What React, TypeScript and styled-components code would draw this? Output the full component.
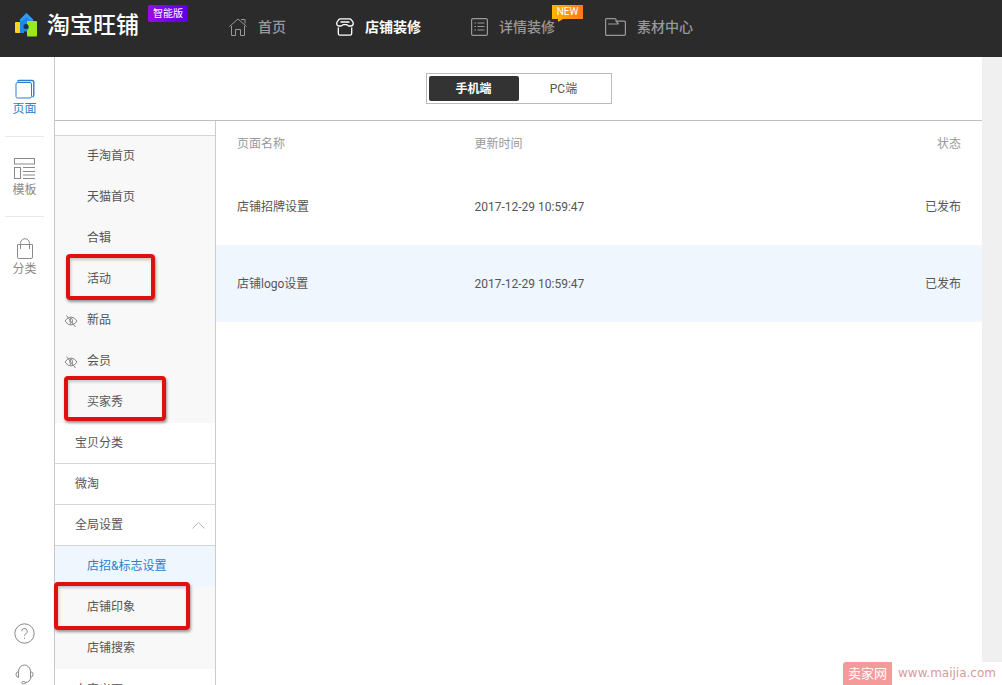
import React from "react";
import styled, { createGlobalStyle, css } from "styled-components";

const GlobalStyle = createGlobalStyle`
  * { box-sizing: border-box; }
  body {
    margin: 0;
    background: #f0f0f0;
    color: #555;
    font: 12px/20px Roboto, "Noto Sans CJK SC", sans-serif;
  }
  a { color: inherit; text-decoration: none; }
  button { font: inherit; color: inherit; border: 0; padding: 0; background: none; cursor: pointer; }
  svg { display: block; flex: none; }
`;

const Page = styled.div`
  display: flex;
  flex-direction: column;
  height: 100vh;
  overflow: hidden;
`;

const Header = styled.header`
  display: flex;
  flex: none;
  align-items: flex-start;
  height: 57px;
  padding-left: 14px;
  background: #2b2b2b;
`;

const Brand = styled.a`
  display: flex;
  gap: 9px;
  width: 215px;
  color: #fff;
`;

const BrandIcon = styled.svg`
  margin-top: 12px;
`;

const BrandName = styled.span`
  margin-top: 11px;
  font-size: 23px;
  font-weight: 500;
  line-height: 30px;
  white-space: nowrap;
`;

const Edition = styled.span`
  flex: none;
  height: 17px;
  margin-top: 5px;
  padding: 0 5px;
  border-radius: 2px;
  background: linear-gradient(90deg, #9a0ae6, #5a00e6);
  font-size: 10px;
  line-height: 17px;
`;

const TopNav = styled.nav`
  display: flex;
  gap: 50px;
`;

const TopLink = styled.a<{ $active?: boolean }>`
  position: relative;
  display: flex;
  align-items: center;
  gap: 11px;
  height: 54px;
  color: ${(p) => (p.$active ? "#fff" : "#999")};
  font-size: 14px;
  font-weight: ${(p) => (p.$active ? 700 : 500)};
  white-space: nowrap;
`;

const NewBadge = styled.span`
  position: absolute;
  top: 5px;
  right: -28px;
  width: 31px;
  height: 14px;
  background: linear-gradient(90deg, #ffb400, #ff7a1a);
  color: #fff;
  font-size: 10px;
  font-weight: 400;
  line-height: 14px;
  text-align: center;

  &::after {
    content: "";
    position: absolute;
    top: 14px;
    left: 6px;
    border-top: 3px solid #ffa808;
    border-right: 5px solid transparent;
  }
`;

const Body = styled.div`
  display: flex;
  flex: 1;
  min-height: 0;
  margin-right: 20px;
  background: #fff;
`;

const Rail = styled.nav`
  display: flex;
  flex: none;
  flex-direction: column;
  justify-content: space-between;
  width: 55px;
  padding: 0 10px 0 5px;
  border-right: 1px solid #c8c8c8;
`;

const RailLink = styled.a<{ $active?: boolean }>`
  display: flex;
  flex-direction: column;
  align-items: center;
  height: 79px;
  padding-top: 22px;
  color: ${(p) => (p.$active ? "#2a7fd0" : "#8a8a8a")};

  & + & {
    height: 80px;
    padding-top: 21px;
    border-top: 1px solid #e8e8e8;
  }
`;

const RailTools = styled.div`
  display: flex;
  flex-direction: column;
  align-items: center;
  gap: 20px;
  color: #888;
`;

const Main = styled.div`
  display: flex;
  flex: 1;
  flex-direction: column;
  min-width: 0;
`;

const DeviceBar = styled.div`
  display: flex;
  flex: none;
  align-items: center;
  justify-content: center;
  height: 64px;
  border-bottom: 1px solid #bfbfbf;
`;

const Segmented = styled.div`
  display: flex;
  height: 31px;
  padding: 2px;
  border: 1px solid #bbb;
`;

const Segment = styled.button<{ $active?: boolean }>`
  width: 90px;
  border-radius: 2px;
  ${(p) => p.$active && css`
    background: #333;
    color: #fff;
    font-weight: 700;
  `}
`;

const Workspace = styled.div`
  display: flex;
  flex: 1;
  min-height: 0;
`;

const SideNav = styled.nav`
  flex: none;
  width: 161px;
  padding-top: 14px;
  border-right: 1px solid #ccc;
`;

const SubList = styled.div`
  border-top: 1px solid #d4d4d4;
  background: #f8f8f8;
`;

const SideItem = styled.a<{ $level?: "top"; $active?: boolean; $ruled?: boolean }>`
  position: relative;
  display: flex;
  align-items: center;
  height: 41px;
  padding-left: ${(p) => (p.$level === "top" ? 20 : 32)}px;
  padding-bottom: ${(p) => (p.$level === "top" ? 0 : 2)}px;
  ${(p) => p.$ruled && css`border-bottom: 1px solid #d8d8d8;`}
  ${(p) => p.$active && css`
    background: #eff6fe;
    color: #2a7fd0;
  `}
`;

const SideToggle = styled(SideItem).attrs({ as: "button" })`
  justify-content: space-between;
  width: 100%;
  height: 40px;
  padding-right: 10px;
`;

const HiddenMark = styled.svg`
  position: absolute;
  top: 14px;
  left: 9px;
`;

const Highlight = styled.span<{ $top: number; $left: number; $width: number; $height: number }>`
  position: absolute;
  z-index: 1;
  top: ${(p) => p.$top}px;
  left: ${(p) => p.$left}px;
  width: ${(p) => p.$width}px;
  height: ${(p) => p.$height}px;
  border: 4px solid #de1010;
  border-radius: 4px;
  box-shadow: 1px 2px 3px rgba(0, 0, 0, 0.4), inset 1px 2px 3px rgba(0, 0, 0, 0.2);
`;

const Content = styled.main`
  flex: 1;
  min-width: 0;
`;

const Table = styled.table`
  width: 100%;
  border-collapse: collapse;
  table-layout: fixed;
`;

const Th = styled.th<{ $end?: boolean }>`
  width: ${(p) => (p.$end ? "auto" : "31%")};
  height: 47px;
  padding: 0 21px 2px;
  color: #999;
  font-weight: 400;
  text-align: ${(p) => (p.$end ? "right" : "left")};
`;

const Row = styled.tr<{ $tinted?: boolean }>`
  background: ${(p) => (p.$tinted ? "#eff6fe" : "#fff")};
`;

const Td = styled.td<{ $end?: boolean }>`
  height: 77px;
  padding: 0 21px;
  text-align: ${(p) => (p.$end ? "right" : "left")};
`;

const SiteMark = styled.a`
  position: fixed;
  right: 0;
  bottom: 0;
  display: flex;
  gap: 6px;
  height: 23px;
  padding-right: 6px;
  background: #fff;
  color: #dc98a0;
  font-family: "DejaVu Sans", sans-serif;
  font-size: 12px;
  line-height: 22px;
`;

const SiteTag = styled.span`
  padding: 0 5px;
  border-radius: 3px 0 0 0;
  background: #f49a9a;
  color: #fff;
  font-family: "Noto Sans CJK SC", sans-serif;
  font-size: 13px;
`;

const line = { fill: "none", stroke: "currentColor" };

const HomeIcon = () => (
  <svg width="18" height="18" viewBox="0 0 18 18" {...line}>
    <path d="M.5 8.500 9 1l8.500 7.500M2.500 8v9.500h4v-6h5v6h4V8M12 1.500h4v4" />
  </svg>
);

const ShopIcon = () => (
  <svg width="18" height="18" viewBox="0 0 18 18" {...line} strokeWidth="1.300">
    <path d="M4.500.8h9q1.200 0 1.900 1l1.400 2q.5.700.500 1.500 0 2.700-2.500 2.700h-1.800q-.7 0-1.200-.6-.6-.7-1.400-.7H7.600q-.8 0-1.400.7-.5.6-1.200.6H3.200Q.7 8 .7 5.300q0-.8.500-1.500l1.400-2q.7-1 1.900-1zM4.500 4h9" />
    <path d="M2.300 9.500v6q0 1.700 1.700 1.700h10q1.700 0 1.700-1.700v-6" />
  </svg>
);

const ListIcon = () => (
  <svg width="17" height="18" viewBox="0 0 17 18" {...line} strokeWidth="1.200">
    <rect x=".6" y=".6" width="15.800" height="16.800" rx="1.500" />
    <path d="M3.500 5h1.500M6.500 5h7M3.500 8.500h1.500M6.500 8.500h7M3.500 12h1.500M6.500 12h7" />
  </svg>
);

const FolderIcon = () => (
  <svg width="21" height="18" viewBox="0 0 21 18" {...line} strokeWidth="1.200">
    <path d="M.6 16V1.600q0-1 1-1h8.400q1 0 1 1v1.500h8.400q1 0 1 1V16q0 1.400-1 1.400H1.600q-1 0-1-1.400zM3 6h10.500M11 3l2.500 3" />
  </svg>
);

const PagesIcon = () => (
  <svg width="20" height="20" viewBox="0 0 20 20" {...line}>
    <rect x="1" y="3.500" width="15.500" height="15.500" rx="1.500" />
    <path d="M2.500 2.500Q3 1.500 4 1.500h13q1.800 0 1.800 1.800v12.500q0 1.600-1.300 2.400" strokeWidth="1.400" />
  </svg>
);

const TemplateIcon = () => (
  <svg width="22" height="22" viewBox="0 0 22 22" {...line}>
    <rect x=".5" y=".5" width="20" height="5.500" />
    <rect x=".5" y="9.500" width="6" height="11" />
    <path d="M9 9.500h12M9 13.500h12M9 17h12M9 20.500h12" />
  </svg>
);

const BagIcon = () => (
  <svg width="18" height="21" viewBox="0 0 18 21" {...line}>
    <path d="M1.500 6.500h15v12.500q0 1.500-1.300 1.500H2.800q-1.300 0-1.300-1.500zM4.500 11V5.500a4.500 4.800 0 0 1 9 0V11" />
  </svg>
);

const HelpIcon = () => (
  <svg width="21" height="21" viewBox="0 0 21 21" {...line}>
    <circle cx="10.500" cy="10.500" r="9.700" />
    <path d="M7.700 8.300a2.800 2.800 0 1 1 4.200 2.400q-1.400.8-1.400 2.100M10.500 14.500v1.300" />
  </svg>
);

const HeadsetIcon = () => (
  <svg width="19" height="21" viewBox="0 0 19 21" {...line}>
    <path d="M3.500 7.500a6 6.500 0 0 1 12 0v6q0 4.500-5 5M3.500 7.500q-2.500.5-2.500 3t2.500 3zM15.500 7.500q2.500.5 2.500 3t-2.500 3" />
    <ellipse cx="8.700" cy="18.700" rx="1.900" ry="1.200" />
  </svg>
);

const EyeOff = () => (
  <HiddenMark width="14" height="14" viewBox="0 0 14 14" {...line} stroke="#888">
    <path d="M1 7Q3.500 3 7 3T13 7Q10.500 11 7 11T1 7zM2.500 1.500l9 11.500M7 3.500q-2.500 3.500 0 7M7.500 4q2 3 .5 5" />
  </HiddenMark>
);

const pages = [
  { name: "手淘首页" },
  { name: "天猫首页" },
  { name: "合辑" },
  { name: "活动", mark: { $top: -5, $left: 11, $width: 89, $height: 46 } },
  { name: "新品", hidden: true },
  { name: "会员", hidden: true },
  { name: "买家秀", mark: { $top: -6, $left: 9, $width: 102, $height: 45 } },
];

const settings = [
  { name: "店招&标志设置", active: true },
  { name: "店铺印象", mark: { $top: -5, $left: -1, $width: 136, $height: 48 } },
  { name: "店铺搜索" },
];

const rows = [
  { name: "店铺招牌设置", time: "2017-12-29 10:59:47", state: "已发布" },
  { name: "店铺logo设置", time: "2017-12-29 10:59:47", state: "已发布" },
];

export default function App() {
  return (
    <Page>
      <GlobalStyle />
      <Header>
        <Brand href="#">
          <BrandIcon width="24" height="26" viewBox="0 0 24 26">
            <path d="M12.500 1 19 7.500v12H6v-12z" fill="#1e88e5" />
            <path d="M12.500 1 19.500 8l-2 2-5-5-5 5-2-2z" fill="#2f9bf5" />
            <rect x="1" y="10" width="6" height="11" rx="1" fill="#ffd21f" />
            <path d="M6 10h3.500l-1.500 4 2 4v3H6z" fill="#1e88e5" />
            <path d="M13 9h9q1 0 1 1v13q0 1.500-1 1.500h-8q-1 0-1-1.500v-4l2-3.500-2-3z" fill="#9be81c" />
            <circle cx="12" cy="14.500" r="2.500" fill="#17324d" />
          </BrandIcon>
          <BrandName>淘宝旺铺</BrandName>
          <Edition>智能版</Edition>
        </Brand>
        <TopNav>
          <TopLink href="#"><HomeIcon />首页</TopLink>
          <TopLink href="#" $active><ShopIcon />店铺装修</TopLink>
          <TopLink href="#"><ListIcon />详情装修<NewBadge>NEW</NewBadge></TopLink>
          <TopLink href="#"><FolderIcon />素材中心</TopLink>
        </TopNav>
      </Header>
      <Body>
        <Rail>
          <div>
            <RailLink href="#" $active><PagesIcon />页面</RailLink>
            <RailLink href="#"><TemplateIcon />模板</RailLink>
            <RailLink href="#"><BagIcon />分类</RailLink>
          </div>
          <RailTools>
            <button aria-label="帮助"><HelpIcon /></button>
            <button aria-label="客服"><HeadsetIcon /></button>
          </RailTools>
        </Rail>
        <Main>
          <DeviceBar>
            <Segmented>
              <Segment $active>手机端</Segment>
              <Segment>PC端</Segment>
            </Segmented>
          </DeviceBar>
          <Workspace>
            <SideNav>
              <SubList>
                {pages.map((p) => (
                  <SideItem href="#" key={p.name}>
                    {p.hidden && <EyeOff />}
                    {p.name}
                    {p.mark && <Highlight {...p.mark} />}
                  </SideItem>
                ))}
              </SubList>
              <SideItem href="#" $level="top" $ruled>宝贝分类</SideItem>
              <SideItem href="#" $level="top" $ruled>微淘</SideItem>
              <SideToggle $level="top">
                全局设置
                <svg width="13" height="8" viewBox="0 0 13 8" fill="none" stroke="#bbb">
                  <path d="M.5 7.500l6-6 6 6" />
                </svg>
              </SideToggle>
              <SubList>
                {settings.map((s) => (
                  <SideItem href="#" key={s.name} $active={s.active}>
                    {s.name}
                    {s.mark && <Highlight {...s.mark} />}
                  </SideItem>
                ))}
              </SubList>
              <SideItem href="#" $level="top">自定义页</SideItem>
            </SideNav>
            <Content>
              <Table>
                <thead>
                  <tr>
                    <Th>页面名称</Th>
                    <Th>更新时间</Th>
                    <Th $end>状态</Th>
                  </tr>
                </thead>
                <tbody>
                  {rows.map((r, i) => (
                    <Row key={r.name} $tinted={i % 2 === 1}>
                      <Td>{r.name}</Td>
                      <Td>{r.time}</Td>
                      <Td $end>{r.state}</Td>
                    </Row>
                  ))}
                </tbody>
              </Table>
            </Content>
          </Workspace>
        </Main>
      </Body>
      <SiteMark href="#"><SiteTag>卖家网</SiteTag>www.maijia.com</SiteMark>
    </Page>
  );
}
